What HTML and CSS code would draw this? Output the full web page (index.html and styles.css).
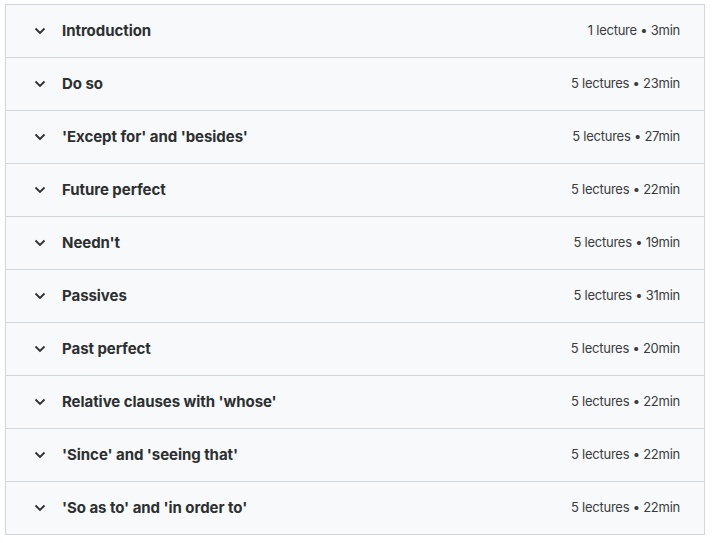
FILE: index.html
```html
<!DOCTYPE html>
<html>
<head>
<meta charset="utf-8">
<link rel="stylesheet" href="styles.css">
</head>
<body>
<div class="curriculum">
  <div class="section"><span class="chev"><svg viewBox="0 0 12 8" width="12" height="8"><path d="M1.5 1.5 L6 6 L10.5 1.5" fill="none" stroke="#2d2f31" stroke-width="1.8"/></svg></span><span class="title">Introduction</span><span class="meta">1 lecture • 3min</span></div>
  <div class="section"><span class="chev"><svg viewBox="0 0 12 8" width="12" height="8"><path d="M1.5 1.5 L6 6 L10.5 1.5" fill="none" stroke="#2d2f31" stroke-width="1.8"/></svg></span><span class="title">Do so</span><span class="meta">5 lectures • 23min</span></div>
  <div class="section"><span class="chev"><svg viewBox="0 0 12 8" width="12" height="8"><path d="M1.5 1.5 L6 6 L10.5 1.5" fill="none" stroke="#2d2f31" stroke-width="1.8"/></svg></span><span class="title">'Except for' and 'besides'</span><span class="meta">5 lectures • 27min</span></div>
  <div class="section"><span class="chev"><svg viewBox="0 0 12 8" width="12" height="8"><path d="M1.5 1.5 L6 6 L10.5 1.5" fill="none" stroke="#2d2f31" stroke-width="1.8"/></svg></span><span class="title">Future perfect</span><span class="meta">5 lectures • 22min</span></div>
  <div class="section"><span class="chev"><svg viewBox="0 0 12 8" width="12" height="8"><path d="M1.5 1.5 L6 6 L10.5 1.5" fill="none" stroke="#2d2f31" stroke-width="1.8"/></svg></span><span class="title">Needn't</span><span class="meta">5 lectures • 19min</span></div>
  <div class="section"><span class="chev"><svg viewBox="0 0 12 8" width="12" height="8"><path d="M1.5 1.5 L6 6 L10.5 1.5" fill="none" stroke="#2d2f31" stroke-width="1.8"/></svg></span><span class="title">Passives</span><span class="meta">5 lectures • 31min</span></div>
  <div class="section"><span class="chev"><svg viewBox="0 0 12 8" width="12" height="8"><path d="M1.5 1.5 L6 6 L10.5 1.5" fill="none" stroke="#2d2f31" stroke-width="1.8"/></svg></span><span class="title">Past perfect</span><span class="meta">5 lectures • 20min</span></div>
  <div class="section"><span class="chev"><svg viewBox="0 0 12 8" width="12" height="8"><path d="M1.5 1.5 L6 6 L10.5 1.5" fill="none" stroke="#2d2f31" stroke-width="1.8"/></svg></span><span class="title">Relative clauses with 'whose'</span><span class="meta">5 lectures • 22min</span></div>
  <div class="section"><span class="chev"><svg viewBox="0 0 12 8" width="12" height="8"><path d="M1.5 1.5 L6 6 L10.5 1.5" fill="none" stroke="#2d2f31" stroke-width="1.8"/></svg></span><span class="title">'Since' and 'seeing that'</span><span class="meta">5 lectures • 22min</span></div>
  <div class="section"><span class="chev"><svg viewBox="0 0 12 8" width="12" height="8"><path d="M1.5 1.5 L6 6 L10.5 1.5" fill="none" stroke="#2d2f31" stroke-width="1.8"/></svg></span><span class="title">'So as to' and 'in order to'</span><span class="meta">5 lectures • 22min</span></div>
</div>
</body>
</html>
```
FILE: styles.css
```css
html, body {
  margin: 0;
  padding: 0;
  background: #ffffff;
}
body {
  font-family: Inter, "Liberation Sans", sans-serif;
  color: #2d2f31;
}
.curriculum {
  margin: 4px 0 0 5px;
  width: 698px;
  border: 1px solid #d1d7dc;
  border-bottom: none;
}
.section {
  display: flex;
  align-items: center;
  height: 50px;
  padding: 0 24px 2px 28px;
  background: #f7f9fa;
  border-bottom: 1px solid #d1d7dc;
}
.chev {
  display: flex;
  width: 12px;
  margin-right: 16px;
  position: relative;
  top: 1px;
}
.title {
  flex: 1;
  font-size: 15px;
  font-weight: 700;
  letter-spacing: -0.05px;
}
.meta {
  font-size: 13px;
  font-weight: 400;
  letter-spacing: -0.25px;
  color: #3a3c3e;
}
```
